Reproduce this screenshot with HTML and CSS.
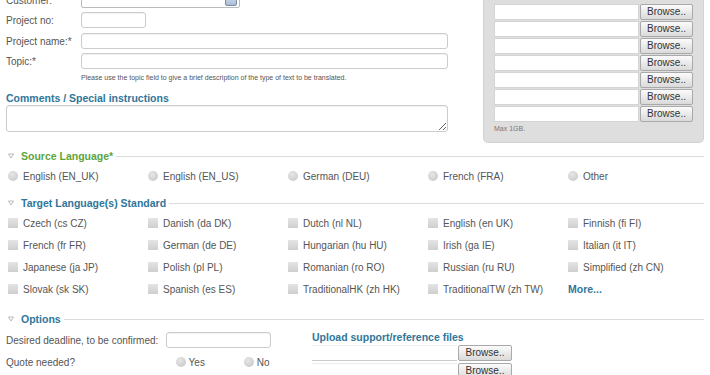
FILE: index.html
```html
<!DOCTYPE html>
<html lang="en">

<head>
    <meta charset="UTF-8">
    <title>Translation order</title>
    <link rel="stylesheet" href="styles.css">
</head>

<body>
    <main class="page">
        <!-- Project details + file upload -->
        <section class="top">
            <div class="details">
                <div class="field-row">
                    <label class="field-label">Customer:</label>
                    <div class="select"><span class="select-btn"></span></div>
                </div>
                <div class="field-row gap-5">
                    <label class="field-label">Project no:</label>
                    <input class="text-input short" type="text">
                </div>
                <div class="field-row">
                    <label class="field-label">Project name:*</label>
                    <input class="text-input wide" type="text">
                </div>
                <div class="field-row">
                    <label class="field-label">Topic:*</label>
                    <input class="text-input wide" type="text">
                </div>
                <p class="hint">Please use the topic field to give a brief description of the type of text to be translated.</p>
                <h2 class="sub-title">Comments / Special instructions</h2>
                <textarea class="comments"></textarea>
            </div>

            <div class="upload-panel">
                <div class="file-row"><input class="file-name" type="text"><button class="browse-btn">Browse..</button></div>
                <div class="file-row"><input class="file-name" type="text"><button class="browse-btn">Browse..</button></div>
                <div class="file-row"><input class="file-name" type="text"><button class="browse-btn">Browse..</button></div>
                <div class="file-row"><input class="file-name" type="text"><button class="browse-btn">Browse..</button></div>
                <div class="file-row"><input class="file-name" type="text"><button class="browse-btn">Browse..</button></div>
                <div class="file-row"><input class="file-name" type="text"><button class="browse-btn">Browse..</button></div>
                <div class="file-row"><input class="file-name" type="text"><button class="browse-btn">Browse..</button></div>
                <p class="max-size">Max 1GB.</p>
            </div>
        </section>

        <!-- Source language -->
        <section class="group source">
            <div class="group-head">
                <svg class="toggle" width="6" height="6" viewBox="0 0 6 6"><path d="M0.5 1 L5.5 1 L3 5 Z" fill="none" stroke="#aaa" stroke-width="0.8"/></svg>
                <span class="group-title green">Source Language*</span>
                <span class="group-line"></span>
            </div>
            <div class="lang-grid">
                <div class="lang"><span class="radio"></span>English (EN_UK)</div>
                <div class="lang"><span class="radio"></span>English (EN_US)</div>
                <div class="lang"><span class="radio"></span>German (DEU)</div>
                <div class="lang"><span class="radio"></span>French (FRA)</div>
                <div class="lang"><span class="radio"></span>Other</div>
            </div>
        </section>

        <!-- Target languages -->
        <section class="group target">
            <div class="group-head">
                <svg class="toggle" width="6" height="6" viewBox="0 0 6 6"><path d="M0.5 1 L5.5 1 L3 5 Z" fill="none" stroke="#aaa" stroke-width="0.8"/></svg>
                <span class="group-title">Target Language(s) Standard</span>
                <span class="group-line"></span>
            </div>
            <div class="lang-grid">
                <div class="lang"><span class="check"></span>Czech (cs CZ)</div>
                <div class="lang"><span class="check"></span>Danish (da DK)</div>
                <div class="lang"><span class="check"></span>Dutch (nl NL)</div>
                <div class="lang"><span class="check"></span>English (en UK)</div>
                <div class="lang"><span class="check"></span>Finnish (fi FI)</div>
                <div class="lang"><span class="check"></span>French (fr FR)</div>
                <div class="lang"><span class="check"></span>German (de DE)</div>
                <div class="lang"><span class="check"></span>Hungarian (hu HU)</div>
                <div class="lang"><span class="check"></span>Irish (ga IE)</div>
                <div class="lang"><span class="check"></span>Italian (it IT)</div>
                <div class="lang"><span class="check"></span>Japanese (ja JP)</div>
                <div class="lang"><span class="check"></span>Polish (pl PL)</div>
                <div class="lang"><span class="check"></span>Romanian (ro RO)</div>
                <div class="lang"><span class="check"></span>Russian (ru RU)</div>
                <div class="lang"><span class="check"></span>Simplified (zh CN)</div>
                <div class="lang"><span class="check"></span>Slovak (sk SK)</div>
                <div class="lang"><span class="check"></span>Spanish (es ES)</div>
                <div class="lang"><span class="check"></span>TraditionalHK (zh HK)</div>
                <div class="lang"><span class="check"></span>TraditionalTW (zh TW)</div>
                <div class="lang"><a href="#" class="more-link">More...</a></div>
            </div>
        </section>

        <!-- Options -->
        <section class="group options">
            <div class="group-head">
                <svg class="toggle" width="6" height="6" viewBox="0 0 6 6"><path d="M0.5 1 L5.5 1 L3 5 Z" fill="none" stroke="#aaa" stroke-width="0.8"/></svg>
                <span class="group-title">Options</span>
                <span class="group-line"></span>
            </div>
            <div class="options-body">
                <div class="options-left">
                    <div class="option-row">
                        <span class="option-label">Desired deadline, to be confirmed:</span>
                        <input class="text-input deadline" type="text">
                    </div>
                    <div class="option-row quote">
                        <span class="option-label quote-label">Quote needed?</span>
                        <span class="choice"><span class="radio"></span>Yes</span>
                        <span class="choice"><span class="radio"></span>No</span>
                    </div>
                </div>
                <div class="options-right">
                    <h2 class="sub-title">Upload support/reference files</h2>
                    <div class="file-row plain"><input class="file-name" type="text"><button class="browse-btn">Browse..</button></div>
                    <div class="file-row plain"><input class="file-name" type="text"><button class="browse-btn">Browse..</button></div>
                </div>
            </div>
        </section>
    </main>
</body>

</html>
```

FILE: styles.css
```css
* {
    margin: 0;
    padding: 0;
    box-sizing: border-box;
    font-family: 'Liberation Sans', Arial, sans-serif;
}

body {
    background-color: #fff;
    color: #555;
    font-size: 10px;
    overflow: hidden;
}

.page {
    width: 710px;
    padding: 0 6px;
}

/* ---------- top part ---------- */

.top {
    display: flex;
    align-items: flex-start;
    margin-top: -8px;
}

.details {
    width: 442px;
}

.field-row {
    display: flex;
    align-items: center;
    height: 16px;
    margin-bottom: 4px;
}

.field-row.gap-5 {
    margin-bottom: 5px;
}

.field-label {
    width: 75px;
    color: #555;
}

.text-input {
    height: 16px;
    border: 1px solid #ccc;
    border-radius: 3px;
    background-color: #fff;
    box-shadow: inset 0 1px 1px rgba(0, 0, 0, 0.06);
    outline: none;
}

.text-input.short {
    width: 65px;
}

.text-input.wide {
    width: 367px;
}

.select {
    width: 159px;
    height: 16px;
    border: 1px solid #bbb;
    border-radius: 2px;
    background-color: #fff;
    display: flex;
    justify-content: flex-end;
    align-items: center;
    padding-right: 2px;
}

.select-btn {
    width: 12px;
    height: 12px;
    border: 1px solid #7a8aa0;
    border-radius: 2px;
    background: linear-gradient(#d8e2f0, #a9bcd6);
}

.hint {
    margin: -1px 0 0 75px;
    font-size: 7px;
    line-height: 12px;
    color: #555;
}

.sub-title {
    font-size: 10.5px;
    font-weight: bold;
    line-height: 12px;
    color: #30769a;
}

.details .sub-title {
    margin-top: 8px;
}

.comments {
    display: block;
    width: 442px;
    height: 27px;
    margin-top: 1px;
    border: 1px solid #ccc;
    border-radius: 3px;
    box-shadow: inset 0 1px 1px rgba(0, 0, 0, 0.06);
    outline: none;
}

.upload-panel {
    width: 221px;
    margin-left: 35px;
    padding: 11px 10px 8px;
    background-color: #dedede;
    border: 1px solid #d2d2d2;
    border-top: none;
    border-radius: 0 0 5px 5px;
}

.file-row {
    display: flex;
    align-items: center;
    height: 17px;
}

.file-name {
    width: 145px;
    height: 16px;
    border: 1px solid #d4d4d4;
    background-color: #fff;
    outline: none;
}

.browse-btn {
    width: 54px;
    height: 16px;
    margin-left: 1px;
    border: 1px solid #a9a9a9;
    border-radius: 2px;
    background: linear-gradient(#fbfbfb, #dadada);
    font-size: 10px;
    color: #333;
    line-height: 14px;
}

.max-size {
    margin-top: 2px;
    font-size: 7px;
    line-height: 10px;
    color: #777;
}

/* ---------- groups ---------- */

.group-head {
    display: flex;
    align-items: center;
    height: 10px;
    padding-left: 2px;
}

.toggle {
    margin-right: 7px;
}

.group-title {
    font-size: 10.5px;
    font-weight: bold;
    color: #30769a;
    white-space: nowrap;
}

.group-title.green {
    color: #5ea43c;
}

.group-line {
    flex: 1;
    height: 1px;
    margin-left: 3px;
    background-color: #dcdcdc;
}

.source {
    margin-top: 8px;
}

.source .group-head {
    margin-bottom: 4px;
}

.target {
    margin-top: 11px;
}

.target .group-head {
    margin-bottom: 4px;
}

.options {
    margin-top: 14px;
}

.lang-grid {
    display: grid;
    grid-template-columns: repeat(5, 140px);
    padding-left: 2px;
}

.lang {
    display: flex;
    align-items: center;
    gap: 5px;
    height: 22px;
    color: #555;
    white-space: nowrap;
}

.radio {
    width: 10px;
    height: 10px;
    border-radius: 50%;
    background: radial-gradient(circle at 40% 35%, #e6e6e6, #c4c4c4);
}

.check {
    width: 10px;
    height: 10px;
    background: linear-gradient(#e4e4e4, #cfcfcf);
}

.more-link {
    font-weight: bold;
    font-size: 10.5px;
    color: #30769a;
    text-decoration: none;
}

/* ---------- options ---------- */

.options-body {
    display: flex;
    align-items: flex-start;
}

.options-left {
    width: 306px;
    padding-top: 8px;
}

.option-row {
    display: flex;
    align-items: center;
    height: 16px;
}

.option-row.quote {
    margin-top: 6px;
}

.option-label {
    width: 160px;
}

.quote-label {
    width: 174px;
}

.text-input.deadline {
    width: 105px;
}

.choice {
    display: flex;
    align-items: center;
    gap: 3px;
    width: 70px;
}

.options-right {
    padding-top: 7px;
}

.options-right .file-row {
    margin-top: 1px;
}

.file-row.plain .file-name {
    border: none;
    border-bottom: 1px solid #ccc;
    border-top: 1px solid #eee;
}
```
